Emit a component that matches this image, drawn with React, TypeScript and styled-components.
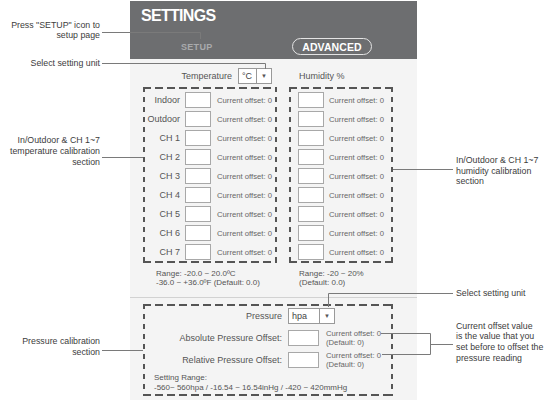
import React from "react";
import styled, { createGlobalStyle } from "styled-components";

const Global = createGlobalStyle`
  html, body { margin: 0; padding: 0; background: #fff; }
  body { font-family: "Liberation Sans", Arial, sans-serif; }
  * { box-sizing: border-box; }
`;

const dashes = (c: string) => `
  background:
    repeating-linear-gradient(90deg, ${c} 0 8px, transparent 8px 12px) left top / 100% 2px no-repeat,
    repeating-linear-gradient(90deg, ${c} 0 8px, transparent 8px 12px) left bottom / 100% 2px no-repeat,
    repeating-linear-gradient(180deg, ${c} 0 5px, transparent 5px 10px) left top / 2px 100% no-repeat,
    repeating-linear-gradient(180deg, ${c} 0 5px, transparent 5px 10px) right top / 2px 100% no-repeat;
`;

const Page = styled.div`
  position: relative;
  width: 550px;
  height: 400px;
  display: flex;
  overflow: hidden;
`;

const Gutter = styled.div`
  flex: none;
  width: 130px;
`;

const Panel = styled.div`
  flex: none;
  width: 287px;
  height: 399px;
  margin-top: 1px;
  background: #f4f4f4;
  display: flex;
  flex-direction: column;
`;

const Header = styled.div`
  height: 58px;
  background: #6d6e70;
  padding: 7px 0 0 11px;
`;

const Title = styled.div`
  color: #fff;
  font-weight: bold;
  font-size: 16px;
  line-height: 16px;
  letter-spacing: -0.7px;
`;

const Tabs = styled.div`
  margin-top: 14px;
  padding-left: 40px;
  display: grid;
  grid-template-columns: 111px 80px;
  align-items: center;
`;

const SetupTab = styled.div`
  color: #a9aaac;
  font-weight: bold;
  font-size: 9px;
  letter-spacing: 0.3px;
`;

const AdvancedPill = styled.div`
  width: 80px;
  height: 17px;
  border: 1.5px solid #e4e4e4;
  border-radius: 9px;
  display: flex;
  align-items: center;
  justify-content: center;
  color: #fff;
  font-weight: bold;
  font-size: 10.5px;
  letter-spacing: 0.1px;
`;

const Upper = styled.div`
  padding: 9px 24px 10px 13px;
`;

const Columns = styled.div<{ $mt?: number }>`
  display: grid;
  grid-template-columns: 134px 104px;
  column-gap: 12px;
  margin-top: ${(p) => p.$mt ?? 0}px;
`;

const UnitCell = styled.div<{ $end?: boolean }>`
  height: 16px;
  display: flex;
  align-items: center;
  justify-content: ${(p) => (p.$end ? "flex-end" : "flex-start")};
  gap: 6px;
  padding: ${(p) => (p.$end ? "0 5px 0 0" : "0 0 0 10px")};
`;

const Label = styled.div<{ $right?: boolean }>`
  font-size: 9px;
  color: #555;
  white-space: nowrap;
  text-align: ${(p) => (p.$right ? "right" : "left")};
`;

const Select = styled.div<{ $w: number }>`
  display: flex;
  height: 16px;
  border: 1px solid #999;
  background: #fff;
`;

const SelectValue = styled.div<{ $w: number }>`
  width: ${(p) => p.$w}px;
  padding-left: 3px;
  font-size: 9px;
  color: #444;
  display: flex;
  align-items: center;
  border-right: 1px solid #999;
`;

const SelectArrow = styled.div`
  width: 14px;
  display: flex;
  align-items: center;
  justify-content: center;
  font-size: 6px;
  color: #555;
`;

const DashedBox = styled.div`
  ${dashes("#555")}
  padding: 5px 2px 3px;
  display: flex;
  flex-direction: column;
  gap: 3px;
`;

const TempRow = styled.div`
  height: 16px;
  display: grid;
  grid-template-columns: 35px 26px 1fr;
  column-gap: 5px;
  align-items: center;
`;

const HumRow = styled.div`
  height: 16px;
  display: grid;
  grid-template-columns: 26px 1fr;
  column-gap: 5px;
  align-items: center;
  padding-left: 7px;
`;

const InputBox = styled.div<{ $w: number }>`
  width: ${(p) => p.$w}px;
  height: 16px;
  background: #fff;
  border: 1px solid #a8a8a8;
`;

const Offset = styled.div<{ $ml?: number }>`
  font-size: 7.7px;
  line-height: 9px;
  color: #666;
  white-space: nowrap;
  margin-left: ${(p) => p.$ml ?? 0}px;
`;

const RangeText = styled.div<{ $pl: number }>`
  font-size: 8px;
  line-height: 9px;
  color: #555;
  padding-left: ${(p) => p.$pl}px;
  white-space: nowrap;
`;

const Divider = styled.div`
  height: 1px;
  background: #d2d2d2;
`;

const Lower = styled.div`
  padding: 6px 24px 0 13px;
`;

const PressureBox = styled.div`
  ${dashes("#555")}
  padding: 3px 2px 3px;
  display: flex;
  flex-direction: column;
  gap: 4px;
`;

const PressureRow = styled.div`
  height: 18px;
  display: grid;
  grid-template-columns: 137px auto 1fr;
  column-gap: 6px;
  align-items: center;
`;

const SettingRange = styled.div`
  padding-left: 9px;
  font-size: 8px;
  line-height: 10px;
  color: #555;
  white-space: nowrap;
`;

const Overlay = styled.div`
  position: absolute;
  inset: 0;
  pointer-events: none;
`;

const Lines = styled.svg`
  position: absolute;
  left: 0;
  top: 0;
`;

const Callout = styled.div<{ $top: number; $x: number; $side: "left" | "right"; $lh: number }>`
  position: absolute;
  top: ${(p) => p.$top}px;
  ${(p) => (p.$side === "left" ? `right: ${550 - p.$x}px; text-align: right;` : `left: ${p.$x}px; text-align: left;`)}
  font-size: 8.8px;
  line-height: ${(p) => p.$lh}px;
  color: #3c3c3c;
  white-space: nowrap;
`;

const tempRows = ["Indoor", "Outdoor", "CH 1", "CH 2", "CH 3", "CH 4", "CH 5", "CH 6", "CH 7"];

export default function App() {
  return (
    <>
      <Global />
      <Page>
        <Gutter />
        <Panel>
          <Header>
            <Title>SETTINGS</Title>
            <Tabs>
              <SetupTab>SETUP</SetupTab>
              <AdvancedPill>ADVANCED</AdvancedPill>
            </Tabs>
          </Header>
          <Upper>
            <Columns>
              <UnitCell $end>
                <Label>Temperature</Label>
                <Select $w={33}>
                  <SelectValue $w={18}>°C</SelectValue>
                  <SelectArrow>▼</SelectArrow>
                </Select>
              </UnitCell>
              <UnitCell>
                <Label>Humidity %</Label>
              </UnitCell>
            </Columns>
            <Columns $mt={3}>
              <DashedBox>
                {tempRows.map((r) => (
                  <TempRow key={r}>
                    <Label $right>{r}</Label>
                    <InputBox $w={26} />
                    <Offset $ml={1}>Current offset: 0</Offset>
                  </TempRow>
                ))}
              </DashedBox>
              <DashedBox>
                {tempRows.map((r) => (
                  <HumRow key={r}>
                    <InputBox $w={26} />
                    <Offset>Current offset: 0</Offset>
                  </HumRow>
                ))}
              </DashedBox>
            </Columns>
            <Columns $mt={6}>
              <RangeText $pl={13}>
                Range: -20.0 ~ 20.0ºC
                <br />
                -36.0 ~ +36.0ºF (Default: 0.0)
              </RangeText>
              <RangeText $pl={10}>
                Range: -20 ~ 20%
                <br />
                (Default: 0.0)
              </RangeText>
            </Columns>
          </Upper>
          <Divider />
          <Lower>
            <PressureBox>
              <PressureRow>
                <Label $right>Pressure</Label>
                <Select $w={46}>
                  <SelectValue $w={31}>hpa</SelectValue>
                  <SelectArrow>▼</SelectArrow>
                </Select>
              </PressureRow>
              <PressureRow>
                <Label $right>Absolute Pressure Offset:</Label>
                <InputBox $w={31} />
                <Offset $ml={1}>
                  Current offset: 0
                  <br />
                  (Default: 0)
                </Offset>
              </PressureRow>
              <PressureRow>
                <Label $right>Relative Pressure Offset:</Label>
                <InputBox $w={31} />
                <Offset $ml={1}>
                  Current offset: 0
                  <br />
                  (Default: 0)
                </Offset>
              </PressureRow>
              <SettingRange>
                Setting Range:
                <br />
                -560~ 560hpa / -16.54 ~ 16.54inHg / -420 ~ 420mmHg
              </SettingRange>
            </PressureBox>
          </Lower>
        </Panel>
        <Overlay>
          <Lines width={550} height={400} viewBox="0 0 550 400">
            <g fill="none" stroke="#7a7a7a" strokeWidth={1}>
              <polyline points="102,32.5 200.5,32.5 200.5,39" />
              <polyline points="102,63.5 265.5,63.5 265.5,69" />
              <line x1={102} y1={157.5} x2={143} y2={157.5} />
              <line x1={102} y1={350.5} x2={143} y2={350.5} />
              <line x1={393} y1={169.5} x2={453} y2={169.5} />
              <polyline points="328.5,307 328.5,293.5 453,293.5" />
              <polyline points="381,333.5 430.5,333.5 430.5,354.5 382,354.5" />
              <line x1={430.5} y1={344.5} x2={453} y2={344.5} />
            </g>
          </Lines>
          <Callout $side="left" $x={100} $top={20} $lh={10}>
            Press "SETUP" icon to
            <br />
            setup page
          </Callout>
          <Callout $side="left" $x={100} $top={58} $lh={10}>
            Select setting unit
          </Callout>
          <Callout $side="left" $x={100} $top={134.5} $lh={11}>
            In/Outdoor &amp; CH 1~7
            <br />
            temperature calibration
            <br />
            section
          </Callout>
          <Callout $side="left" $x={100} $top={335.5} $lh={11}>
            Pressure calibration
            <br />
            section
          </Callout>
          <Callout $side="right" $x={456} $top={155} $lh={10.5}>
            In/Outdoor &amp; CH 1~7
            <br />
            humidity calibration
            <br />
            section
          </Callout>
          <Callout $side="right" $x={456} $top={288} $lh={10}>
            Select setting unit
          </Callout>
          <Callout $side="right" $x={456} $top={320.5} $lh={10.7}>
            Current offset value
            <br />
            is the value that you
            <br />
            set before to offset the
            <br />
            pressure reading
          </Callout>
        </Overlay>
      </Page>
    </>
  );
}
